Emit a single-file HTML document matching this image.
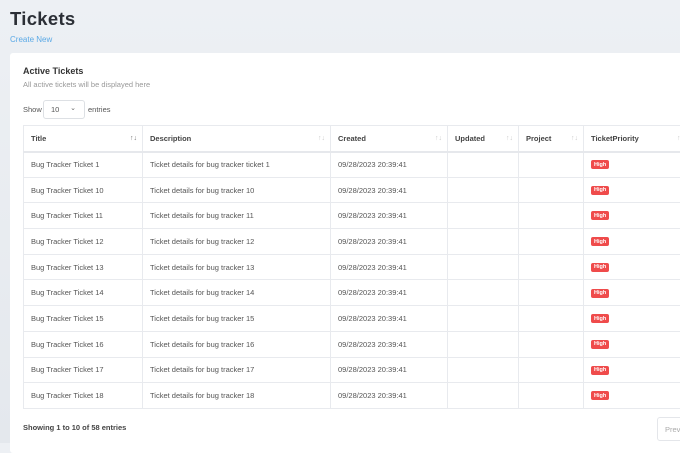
<!DOCTYPE html>
<html><head><style>
*{box-sizing:border-box;margin:0;padding:0}
body{width:680px;height:443px;overflow:hidden;background:linear-gradient(#edf0f4,#e4e8ed);font-family:"Liberation Sans",sans-serif;position:relative}
h1{position:absolute;left:10px;top:8px;font-size:18.5px;font-weight:bold;color:#2b2f36;letter-spacing:0.3px}
.cn{position:absolute;left:10px;top:35px;font-size:8px;color:#5aa9e6}
.card{position:absolute;left:10px;top:53px;width:680px;height:400px;background:#fff;border-radius:3px}
.at{position:absolute;left:23px;top:66px;font-size:9px;font-weight:bold;color:#333}
.sub{position:absolute;left:23px;top:80px;font-size:7.5px;color:#999}
.show{position:absolute;left:23px;top:105px;font-size:7.5px;color:#555}
.sel{position:absolute;left:43px;top:100px;width:42px;height:19px;border:1px solid #dde0e4;border-radius:3px;font-size:7.5px;color:#555;padding:4px 0 0 7px}
.sel span{position:absolute;right:8px;top:3px;font-size:7px;color:#666}
.ent{position:absolute;left:88px;top:105px;font-size:7.5px;color:#555}
table{position:absolute;left:23px;top:125px;width:666px;border-collapse:collapse;font-size:7.5px;color:#555;table-layout:fixed}
td,th{border:1px solid #e8eaee;height:25.7px;padding:0 7px;text-align:left;white-space:nowrap;overflow:hidden;vertical-align:middle}
th{font-weight:bold;color:#444;height:26px;border-bottom:2px solid #e6e8ec;position:relative}
th i{position:absolute;right:5px;top:9px;font-style:normal;font-size:7px;color:#ccc}
th.s i{color:#777}
.b{display:inline-block;background:#ef4b4b;color:#fff;font-size:5.5px;font-weight:bold;padding:1.5px 3px;border-radius:2px;line-height:6px;vertical-align:middle}
.foot{position:absolute;left:23px;top:423px;font-size:7.5px;font-weight:bold;color:#444}
.prev{position:absolute;left:657px;top:417px;width:40px;height:24px;border:1px solid #e4e6ea;border-radius:3px;font-size:7.5px;color:#aaa;padding:7px 0 0 7px}
</style></head><body>
<h1>Tickets</h1>
<div class="cn">Create New</div>
<div class="card"></div>
<div class="at">Active Tickets</div>
<div class="sub">All active tickets will be displayed here</div>
<div class="show">Show</div>
<div class="sel">10<span>⌄</span></div>
<div class="ent">entries</div>
<table>
<colgroup><col style="width:119px"><col style="width:188px"><col style="width:117px"><col style="width:71px"><col style="width:65px"><col style="width:106px"></colgroup>
<tr><th class="s">Title<i>↑↓</i></th><th>Description<i>↑↓</i></th><th>Created<i>↑↓</i></th><th>Updated<i>↑↓</i></th><th>Project<i>↑↓</i></th><th>TicketPriority<i>↑↓</i></th></tr>
<tr><td>Bug Tracker Ticket 1</td><td>Ticket details for bug tracker ticket 1</td><td>09/28/2023 20:39:41</td><td></td><td></td><td><span class="b">High</span></td></tr>
<tr><td>Bug Tracker Ticket 10</td><td>Ticket details for bug tracker 10</td><td>09/28/2023 20:39:41</td><td></td><td></td><td><span class="b">High</span></td></tr>
<tr><td>Bug Tracker Ticket 11</td><td>Ticket details for bug tracker 11</td><td>09/28/2023 20:39:41</td><td></td><td></td><td><span class="b">High</span></td></tr>
<tr><td>Bug Tracker Ticket 12</td><td>Ticket details for bug tracker 12</td><td>09/28/2023 20:39:41</td><td></td><td></td><td><span class="b">High</span></td></tr>
<tr><td>Bug Tracker Ticket 13</td><td>Ticket details for bug tracker 13</td><td>09/28/2023 20:39:41</td><td></td><td></td><td><span class="b">High</span></td></tr>
<tr><td>Bug Tracker Ticket 14</td><td>Ticket details for bug tracker 14</td><td>09/28/2023 20:39:41</td><td></td><td></td><td><span class="b">High</span></td></tr>
<tr><td>Bug Tracker Ticket 15</td><td>Ticket details for bug tracker 15</td><td>09/28/2023 20:39:41</td><td></td><td></td><td><span class="b">High</span></td></tr>
<tr><td>Bug Tracker Ticket 16</td><td>Ticket details for bug tracker 16</td><td>09/28/2023 20:39:41</td><td></td><td></td><td><span class="b">High</span></td></tr>
<tr><td>Bug Tracker Ticket 17</td><td>Ticket details for bug tracker 17</td><td>09/28/2023 20:39:41</td><td></td><td></td><td><span class="b">High</span></td></tr>
<tr><td>Bug Tracker Ticket 18</td><td>Ticket details for bug tracker 18</td><td>09/28/2023 20:39:41</td><td></td><td></td><td><span class="b">High</span></td></tr>
</table>
<div class="foot">Showing 1 to 10 of 58 entries</div>
<div class="prev">Previous</div>
</body></html>
